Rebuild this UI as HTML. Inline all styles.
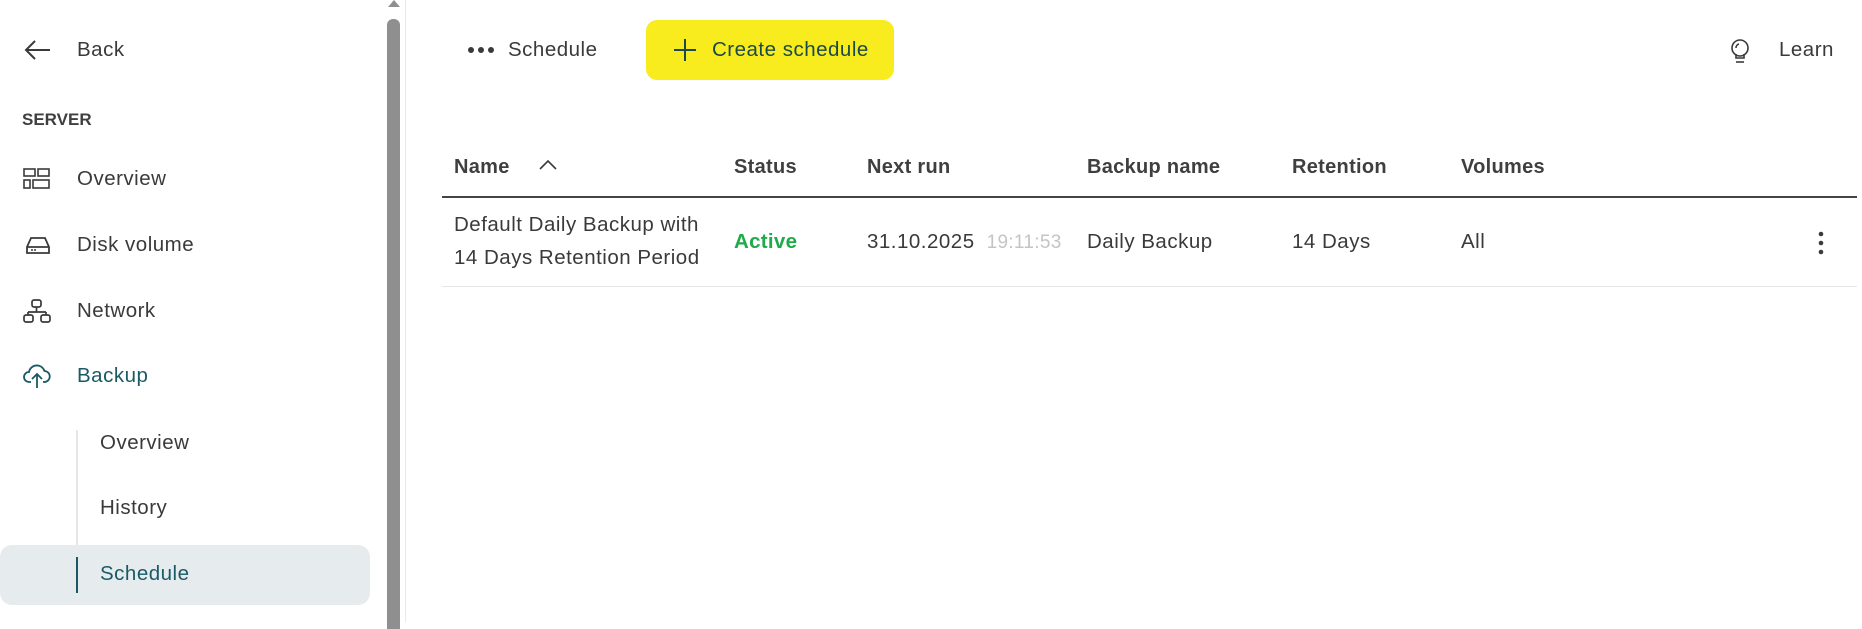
<!DOCTYPE html>
<html><head><meta charset="utf-8"><style>
*{margin:0;padding:0;box-sizing:border-box}
body{width:1862px;height:622px;overflow:hidden;background:#fff;font-family:"Liberation Sans",sans-serif;color:#3a3a3a;position:relative}
.a{position:absolute;white-space:nowrap}
.t{font-size:20.5px;line-height:22px;letter-spacing:0.5px}
.h{font-size:20px;font-weight:bold;color:#3f3f3f;letter-spacing:0.3px}
svg{position:absolute}
</style></head><body>
<svg style="left:24px;top:38px" width="28" height="24" viewBox="0 0 28 24"><path d="M26 12H2M11 3L2 12l9 9" fill="none" stroke="#3a3a3a" stroke-width="2"/></svg>
<div class="a t" style="left:77px;top:39px">Back</div>
<div class="a" style="left:22px;top:110px;font-size:17px;font-weight:bold;color:#3f3f3f">SERVER</div>
<svg style="left:23px;top:168px" width="28" height="22"><g fill="none" stroke="#3a3a3a" stroke-width="1.6"><rect x="1" y="1" width="11" height="7"/><rect x="15" y="1" width="11" height="7"/><rect x="1" y="12" width="6" height="8"/><rect x="10" y="12" width="16" height="8"/></g></svg>
<div class="a t" style="left:77px;top:168px">Overview</div>
<svg style="left:25px;top:236px" width="26" height="20"><g fill="none" stroke="#3a3a3a" stroke-width="1.8"><path d="M2 11L6 2h14l4 9v6H2z"/><path d="M2 11h22"/></g><circle cx="7" cy="14" r="1" fill="#3a3a3a"/><circle cx="10" cy="14" r="1" fill="#3a3a3a"/></svg>
<div class="a t" style="left:77px;top:234px">Disk volume</div>
<svg style="left:23px;top:299px" width="28" height="24"><g fill="none" stroke="#3a3a3a" stroke-width="1.7"><rect x="9" y="1" width="9" height="7" rx="2"/><path d="M13.5 8v5M5 13h18M5 13v3M23 13v3"/><rect x="1" y="16" width="9" height="7" rx="2"/><rect x="18" y="16" width="9" height="7" rx="2"/></g></svg>
<div class="a t" style="left:77px;top:300px">Network</div>
<svg style="left:23px;top:363px" width="28" height="26"><g fill="none" stroke="#1a5a66" stroke-width="1.8"><path d="M8 19H6a5 5 0 0 1 0-10 8 8 0 0 1 15.5-1A5.5 5.5 0 0 1 21 19h-1"/><path d="M14 25V12M9 16l5-5 5 5"/></g></svg>
<div class="a t" style="left:77px;top:365px;color:#1a5a66">Backup</div>
<div class="a" style="left:76px;top:430px;width:2px;height:116px;background:#e6e6e6"></div>
<div class="a t" style="left:100px;top:432px">Overview</div>
<div class="a t" style="left:100px;top:497px">History</div>
<div class="a" style="left:0;top:545px;width:370px;height:60px;background:#e6ecee;border-radius:12px"></div>
<div class="a" style="left:76px;top:557px;width:2px;height:36px;background:#1a5a66"></div>
<div class="a t" style="left:100px;top:563px;color:#1a5a66">Schedule</div>
<div class="a" style="left:387px;top:19px;width:13px;height:610px;background:#8f8f8f;border-radius:6px 6px 0 0"></div>
<div class="a" style="left:388px;top:0;width:0;height:0;border-left:6px solid transparent;border-right:6px solid transparent;border-bottom:7px solid #8f8f8f"></div>
<div class="a" style="left:405px;top:0;width:1px;height:622px;background:#e8e8e8"></div>
<svg style="left:467px;top:45px" width="28" height="10"><circle cx="4" cy="5" r="3" fill="#3a3a3a"/><circle cx="14" cy="5" r="3" fill="#3a3a3a"/><circle cx="24" cy="5" r="3" fill="#3a3a3a"/></svg>
<div class="a t" style="left:508px;top:39px">Schedule</div>
<div class="a" style="left:646px;top:20px;width:248px;height:60px;background:#f8eb1e;border-radius:11px"></div>
<svg style="left:673px;top:38px" width="24" height="24"><path d="M12 1v22M1 12h22" stroke="#1a4a4a" stroke-width="2"/></svg>
<div class="a t" style="left:712px;top:39px;color:#1a4a4a">Create schedule</div>
<svg style="left:1729px;top:39px" width="22" height="28"><g fill="none" stroke="#3a3a3a" stroke-width="1.6"><circle cx="11" cy="9" r="8"/><path d="M7 15v4h8v-4"/><path d="M7 9a4 4 0 0 1 3-4"/><path d="M7 23h8"/></g></svg>
<div class="a t" style="left:1779px;top:39px">Learn</div>
<div class="a h" style="left:454px;top:156px">Name</div>
<svg style="left:538px;top:159px" width="20" height="12"><path d="M2 10l8-8 8 8" fill="none" stroke="#3a3a3a" stroke-width="1.6"/></svg>
<div class="a h" style="left:734px;top:156px">Status</div>
<div class="a h" style="left:867px;top:156px">Next run</div>
<div class="a h" style="left:1087px;top:156px">Backup name</div>
<div class="a h" style="left:1292px;top:156px">Retention</div>
<div class="a h" style="left:1461px;top:156px">Volumes</div>
<div class="a" style="left:442px;top:196px;width:1415px;height:2px;background:#454545"></div>
<div class="a t" style="left:454px;top:214px">Default Daily Backup with</div>
<div class="a t" style="left:454px;top:247px">14 Days Retention Period</div>
<div class="a t" style="left:734px;top:231px;color:#1fab4a;font-weight:bold;letter-spacing:0.3px">Active</div>
<div class="a t" style="left:867px;top:231px">31.10.2025<span style="color:#c4c4c4;font-size:19px;margin-left:12px;letter-spacing:0.3px">19:11:53</span></div>
<div class="a t" style="left:1087px;top:231px">Daily Backup</div>
<div class="a t" style="left:1292px;top:231px">14 Days</div>
<div class="a t" style="left:1461px;top:231px">All</div>
<svg style="left:1817px;top:231px" width="8" height="24"><circle cx="4" cy="3" r="2.3" fill="#3a3a3a"/><circle cx="4" cy="12" r="2.3" fill="#3a3a3a"/><circle cx="4" cy="21" r="2.3" fill="#3a3a3a"/></svg>
<div class="a" style="left:442px;top:286px;width:1415px;height:1px;background:#e6e6e6"></div>
</body></html>
